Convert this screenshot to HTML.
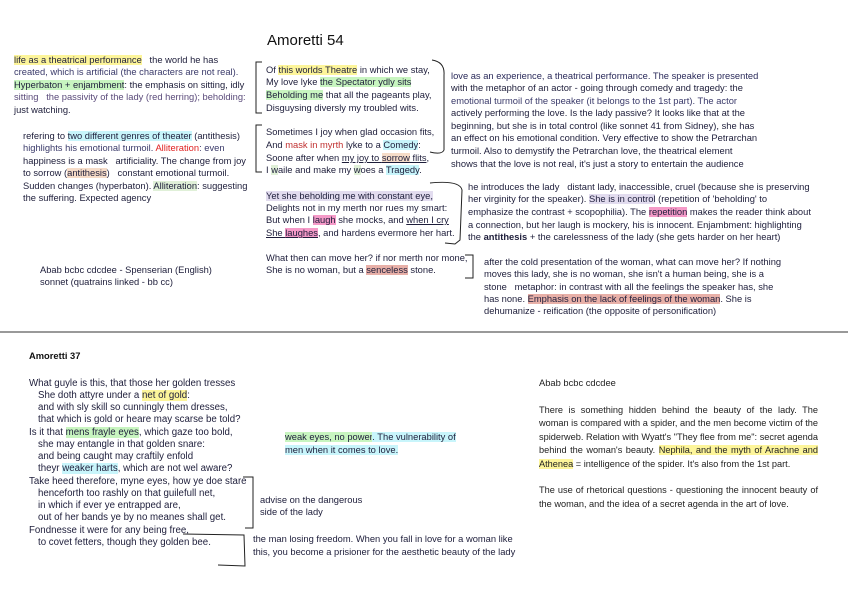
<!DOCTYPE html>
<html><head><meta charset="utf-8"><style>
body{margin:0;width:848px;height:599px;background:#fff;position:relative;overflow:hidden;font-family:"Liberation Sans",sans-serif;color:#1d1d3a}
.l{position:absolute;white-space:nowrap;font-size:9.35px;line-height:11px}
.q{font-size:9.7px}
.y{background:#fdf59a}.g{background:#c8f5c0}.c{background:#c8f5fb}.o{background:#f6dcc8}.p{background:#e2dcef}.k{background:#f59ac8}.r{background:#e8b0a8}.lg{background:#e0f0d8}
u{text-decoration:underline}
</style></head><body>
<div class="l" style="left:267px;top:32px;font-size:15px;line-height:17px;color:#111">Amoretti 54</div>

<div class="l" style="left:14px;top:55px"><span class="y">life as a theatrical performance</span> &nbsp; the world he has</div>
<div class="l" style="left:14px;top:67px;color:#3a3a6a">created, which is artificial (the characters are not real).</div>
<div class="l" style="left:14px;top:80px"><span class="g">Hyperbaton + enjambment</span>: the emphasis on sitting, idly</div>
<div class="l" style="left:14px;top:92px;color:#5a4a7a">sitting &nbsp; the passivity of the lady (red herring); beholding:</div>
<div class="l" style="left:14px;top:105px">just watching.</div>

<div class="l" style="left:23px;top:131px">refering to <span class="c">two different genres of theater</span> (antithesis)</div>
<div class="l" style="left:23px;top:143px;color:#3a3a6a">highlights his emotional turmoil. <span style="color:#e02020">Alliteration</span>: even</div>
<div class="l" style="left:23px;top:156px">happiness is a mask &nbsp; artificiality. The change from joy</div>
<div class="l" style="left:23px;top:168px">to sorrow (<span class="o">antithesis</span>) &nbsp; constant emotional turmoil.</div>
<div class="l" style="left:23px;top:181px">Sudden changes (hyperbaton). <span class="lg">Alliteration</span>: suggesting</div>
<div class="l" style="left:23px;top:193px">the suffering. Expected agency</div>

<div class="l" style="left:40px;top:265px">Abab bcbc cdcdee - Spenserian (English)</div>
<div class="l" style="left:40px;top:277px">sonnet (quatrains linked - bb cc)</div>

<svg style="position:absolute;left:0;top:0" width="848" height="599">
<g fill="none" stroke="#222" stroke-width="1">
<path d="M262 62 L256 62 L256 113 L262 113"/>
<path d="M432 60 Q445 62 444 75 L444 150 Q442 155 430 152"/>
<path d="M262 125 L256 125 L256 172 L262 172"/>
<path d="M430 183 Q460 180 462 190 L460 240 L455 244 L445 243"/>
<path d="M465 255 L473 255 L473 278 L465 278"/>
<path d="M243 477 L253 477 L253 528 L245 528"/>
<path d="M183 534 L244 535 L245 566 L218 565"/>
<path d="M0 332 L848 332" stroke="#999" stroke-width="2"/>
</g></svg>

<div class="l" style="left:266px;top:65px">Of <span class="y">this worlds Theatre</span> in which we stay,</div>
<div class="l" style="left:266px;top:77px">My love lyke <span class="g">the Spectator ydly sits</span></div>
<div class="l" style="left:266px;top:90px"><span class="g">Beholding me</span> that all the pageants play,</div>
<div class="l" style="left:266px;top:103px">Disguysing diversly my troubled wits.</div>

<div class="l" style="left:266px;top:127px">Sometimes I joy when glad occasion fits,</div>
<div class="l" style="left:266px;top:140px">And <span style="color:#c03030">mask in myrth</span> lyke to a <span class="c">Comedy</span>:</div>
<div class="l" style="left:266px;top:153px">Soone after when <u>my joy to <span class="o">sorrow</span> flits</u>,</div>
<div class="l" style="left:266px;top:165px">I <span class="lg">w</span>aile and make my <span class="lg">w</span>oes a <span class="c">Tragedy</span>.</div>

<div class="l" style="left:266px;top:191px"><span class="p">Yet she beholding me with constant eye,</span></div>
<div class="l" style="left:266px;top:203px">Delights not in my merth nor rues my smart:</div>
<div class="l" style="left:266px;top:215px">But when I <span class="k">laugh</span> she mocks, and <u>when I cry</u></div>
<div class="l" style="left:266px;top:228px"><u>She <span class="k">laughes</span></u>, and hardens evermore her hart.</div>

<div class="l" style="left:266px;top:253px">What then can move her? if nor merth nor mone,</div>
<div class="l" style="left:266px;top:265px">She is no woman, but a <span class="r">senceless</span> stone.</div>

<div class="l" style="left:451px;top:71px;color:#2a2a5a">love as an experience, a theatrical performance. The speaker is presented</div>
<div class="l" style="left:451px;top:83px">with the metaphor of an actor - going through comedy and tragedy: the</div>
<div class="l" style="left:451px;top:96px;color:#3a3a6a">emotional turmoil of the speaker (it belongs to the 1st part). The actor</div>
<div class="l" style="left:451px;top:108px">actively performing the love. Is the lady passive? It looks like that at the</div>
<div class="l" style="left:451px;top:121px">beginning, but she is in total control (like sonnet 41 from Sidney), she has</div>
<div class="l" style="left:451px;top:133px">an effect on his emotional condition. Very effective to show the Petrarchan</div>
<div class="l" style="left:451px;top:146px">turmoil. Also to demystify the Petrarchan love, the theatrical element</div>
<div class="l" style="left:451px;top:159px">shows that the love is not real, it's just a story to entertain the audience</div>

<div class="l" style="left:468px;top:182px">he introduces the lady &nbsp; distant lady, inaccessible, cruel (because she is preserving</div>
<div class="l" style="left:468px;top:194px">her virginity for the speaker). <span class="p">She is in control</span> (repetition of 'beholding' to</div>
<div class="l" style="left:468px;top:207px">emphasize the contrast + scopophilia). The <span class="k">repetition</span> makes the reader think about</div>
<div class="l" style="left:468px;top:220px">a connection, but her laugh is mockery, his is innocent. Enjambment: highlighting</div>
<div class="l" style="left:468px;top:232px">the <b>antithesis</b> + the carelessness of the lady (she gets harder on her heart)</div>

<div class="l" style="left:484px;top:257px">after the cold presentation of the woman, what can move her? If nothing</div>
<div class="l" style="left:484px;top:269px">moves this lady, she is no woman, she isn't a human being, she is a</div>
<div class="l" style="left:484px;top:282px">stone &nbsp; metaphor: in contrast with all the feelings the speaker has, she</div>
<div class="l" style="left:484px;top:294px">has none. <span class="r">Emphasis on the lack of feelings of the woman</span>. She is</div>
<div class="l" style="left:484px;top:306px">dehumanize - reification (the opposite of personification)</div>

<div class="l" style="left:29px;top:351px;font-weight:bold;color:#111">Amoretti 37</div>
<div class="l q" style="left:29px;top:378px">What guyle is this, that those her golden tresses</div>
<div class="l q" style="left:38px;top:390px">She doth attyre under a <span class="y">net of gold</span>:</div>
<div class="l q" style="left:38px;top:402px">and with sly skill so cunningly them dresses,</div>
<div class="l q" style="left:38px;top:414px">that which is gold or heare may scarse be told?</div>
<div class="l q" style="left:29px;top:427px">Is it that <span class="g">mens frayle eyes</span>, which gaze too bold,</div>
<div class="l q" style="left:38px;top:439px">she may entangle in that golden snare:</div>
<div class="l q" style="left:38px;top:451px">and being caught may craftily enfold</div>
<div class="l q" style="left:38px;top:463px">theyr <span class="c">weaker harts</span>, which are not wel aware?</div>
<div class="l q" style="left:29px;top:476px">Take heed therefore, myne eyes, how ye doe stare</div>
<div class="l q" style="left:38px;top:488px">henceforth too rashly on that guilefull net,</div>
<div class="l q" style="left:38px;top:500px">in which if ever ye entrapped are,</div>
<div class="l q" style="left:38px;top:512px">out of her bands ye by no meanes shall get.</div>
<div class="l q" style="left:29px;top:525px">Fondnesse it were for any being free,</div>
<div class="l q" style="left:38px;top:537px">to covet fetters, though they golden bee.</div>

<div class="l" style="left:285px;top:432px"><span class="g">weak eyes, no power</span><span class="c">. The vulnerability of</span></div>
<div class="l" style="left:285px;top:445px"><span class="c">men when it comes to love.</span></div>
<div class="l" style="left:260px;top:495px">advise on the dangerous</div>
<div class="l" style="left:260px;top:507px">side of the lady</div>
<div class="l" style="left:253px;top:534px">the man losing freedom. When you fall in love for a woman like</div>
<div class="l" style="left:253px;top:547px">this, you become a prisioner for the aesthetic beauty of the lady</div>

<div class="l" style="left:539px;top:378px;color:#222">Abab bcbc cdcdee</div>
<div style="position:absolute;left:539px;top:404px;width:279px;font-size:9.2px;line-height:13.4px;text-align:justify;color:#222">There is something hidden behind the beauty of the lady. The woman is compared with a spider, and the men become victim of the spiderweb. Relation with Wyatt's "They flee from me": secret agenda behind the woman's beauty. <span class="y">Nephila, and the myth of Arachne and Athenea</span> = intelligence of the spider. It's also from the 1st part.<br><br>The use of rhetorical questions - questioning the innocent beauty of the woman, and the idea of a secret agenda in the art of love.</div>
</body></html>
